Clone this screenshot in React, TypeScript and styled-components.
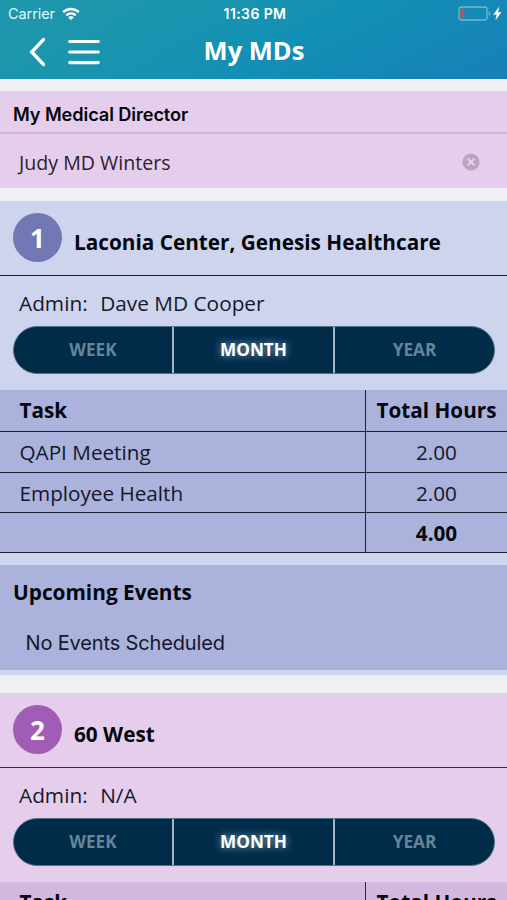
import React from "react";
import styled, { createGlobalStyle } from "styled-components";

type Tone = "blue" | "pink";

const tones = {
  blue: { card: "#ced4ee", panel: "#abb2db", badge: "#7278b4", line: "#1d2230" },
  pink: { card: "#e5ceec", panel: "#d2b8e0", badge: "#a15db6", line: "#382838" },
};

const GlobalStyle = createGlobalStyle`
  * { box-sizing: border-box; }
  html, body, #root { height: 100%; }
  body {
    margin: 0;
    overflow: hidden;
    background: #efeff4;
    color: #05070f;
    font-family: "Open Sans", sans-serif;
    font-size: 20.7px;
  }
`;

const Screen = styled.div`
  display: flex;
  flex-direction: column;
  width: 507px;
  height: 900px;
  overflow: hidden;
`;

const Header = styled.header`
  flex: none;
  height: 79px;
  color: #fff;
  background: linear-gradient(152deg, #1f97ab 0%, #1b95ae 28%, #128fb5 58%, #1780b8 100%);
  box-shadow: 0 1px 0 #dff0f8;
`;

const StatusBar = styled.div`
  display: grid;
  grid-template-columns: 1fr 120px 1fr;
  align-items: center;
  height: 27px;
  padding: 0 5px 0 8px;
  font-family: Inter, sans-serif;
  font-size: 14.5px;
`;

const Carrier = styled.div`
  display: flex;
  align-items: center;
  gap: 7px;
  color: #e0f6fa;
  letter-spacing: -0.08px;
`;

const Clock = styled.div`
  text-align: center;
  font-weight: 600;
  font-size: 14px;
  letter-spacing: 0.4px;
  white-space: nowrap;
`;

const Power = styled.div`
  display: flex;
  justify-content: flex-end;
`;

const NavBar = styled.nav`
  display: grid;
  grid-template-columns: 125px 1fr 125px;
  align-items: center;
  height: 50px;
`;

const NavActions = styled.div`
  display: flex;
  gap: 22px;
  padding-left: 29px;
`;

const Title = styled.h1`
  margin: 0;
  padding: 0 0 4px 1px;
  text-align: center;
  font-size: 25.5px;
  line-height: 46px;
  font-weight: 700;
`;

const Director = styled.section`
  flex: none;
  margin-top: 12.3px;
  height: 97.2px;
  background: ${tones.pink.card};
`;

const DirectorTitle = styled.h2`
  margin: 0;
  height: 43px;
  padding-left: 13px;
  border-bottom: 2px solid #cdb6d4;
  font: 600 18.2px/46px Inter, sans-serif;
  letter-spacing: -0.1px;
`;

const DirectorRow = styled.div`
  display: flex;
  align-items: center;
  justify-content: space-between;
  height: 56px;
  padding: 0 27px 0 19px;
  font-size: 19.6px;
  color: #2b2030;
`;

const Facility = styled.section<{ $tone: Tone; $gap: number }>`
  flex: none;
  margin-top: ${(p) => p.$gap}px;
  height: 474px;
  background: ${(p) => tones[p.$tone].card};
`;

const FacilityHeader = styled.div<{ $tone: Tone }>`
  display: flex;
  align-items: flex-start;
  gap: 12px;
  height: 75px;
  padding: 12px 13px 0;
  border-bottom: 1.4px solid ${(p) => tones[p.$tone].line};
`;

const NumberBadge = styled.span<{ $tone: Tone }>`
  display: grid;
  place-items: center;
  width: 49px;
  height: 49px;
  border-radius: 50%;
  background: ${(p) => tones[p.$tone].badge};
  color: #fff;
  font-size: 26px;
  font-weight: 700;
  line-height: 50px;
`;

const FacilityName = styled.h2`
  margin: 0;
  padding-top: 15px;
  font-size: 20.75px;
  line-height: 28px;
  font-weight: 700;
  white-space: nowrap;
`;

const Admin = styled.div`
  display: flex;
  gap: 12.6px;
  height: 50px;
  padding-left: 19px;
  line-height: 55px;
  font-size: 20.8px;
  color: #15182a;
`;

const Periods = styled.div`
  display: grid;
  grid-template-columns: 158px 161px 161px;
  width: 482px;
  height: 48px;
  margin-left: 13px;
  border: 1px solid #4f7187;
  border-radius: 24px;
  overflow: hidden;
  background: #002b49;
`;

const Period = styled.button<{ $active?: boolean }>`
  padding: 0;
  border: 0;
  background: none;
  font: 700 17.2px/46px "Open Sans", sans-serif;
  color: ${(p) => (p.$active ? "#fff" : "#66859a")};
  text-shadow: ${(p) => (p.$active ? "0 0 8px rgba(190, 225, 245, 0.75)" : "none")};
  & + & { border-left: 2px solid #a4b5c4; }
`;

const Table = styled.div<{ $tone: Tone }>`
  margin-top: 16px;
  background: ${(p) => tones[p.$tone].panel};
`;

const TableRow = styled.div<{ $tone: Tone; $bold?: boolean; $height: number }>`
  display: grid;
  grid-template-columns: 366px 1fr;
  grid-template-rows: 100%;
  height: ${(p) => p.$height}px;
  border-bottom: 1.4px solid ${(p) => tones[p.$tone].line};
  font-weight: ${(p) => (p.$bold ? 700 : 400)};
  line-height: 40px;
  color: ${(p) => (p.$bold ? "#05070f" : "#14182a")};
`;

const TaskCell = styled.div<{ $tone: Tone }>`
  padding-left: 19.5px;
  border-right: 1.4px solid ${(p) => tones[p.$tone].line};
`;

const HoursCell = styled.div`
  text-align: center;
  white-space: nowrap;
`;

const Events = styled.div<{ $tone: Tone }>`
  height: 105px;
  margin-top: 12px;
  padding-left: 13px;
  background: ${(p) => tones[p.$tone].panel};
`;

const EventsTitle = styled.h3`
  margin: 0;
  font-size: 20.8px;
  line-height: 54px;
  font-weight: 700;
`;

const NoEvents = styled.p`
  margin: 0;
  padding-left: 12.5px;
  font: 400 20px/48px Inter, sans-serif;
  letter-spacing: -0.15px;
  color: #14182a;
`;

const WifiIcon = () => (
  <svg width="18" height="14" viewBox="0 0 18 14" fill="none" stroke="#fff" strokeWidth="2.4">
    <path d="M1.2 5.2a11 11 0 0 1 15.6 0" />
    <path d="M4.3 8.3a6.7 6.7 0 0 1 9.4 0" />
    <path d="M6.3 10.4a3.9 3.9 0 0 1 5.4 0L9 13z" fill="#fff" stroke="none" />
  </svg>
);

const BatteryIcon = () => (
  <svg width="44" height="15" viewBox="0 0 44 15">
    <rect x="1" y="1" width="28" height="13" rx="2.5" fill="none" stroke="#71b9d3" strokeWidth="1.3" />
    <rect x="2.6" y="2.8" width="3.6" height="9.4" rx="1" fill="#cf4c4b" />
    <path d="M30.7 5v5q1.6-.7 1.6-2.5T30.7 5z" fill="#71b9d3" />
    <path d="M40.8 1.4 35.6 8.4h3.2l-1 5.2 5.4-7.2h-3.3z" fill="#fff" stroke="#fff" strokeWidth="0.4" />
  </svg>
);

const BackIcon = () => (
  <svg width="17" height="30" viewBox="0 0 17 30" fill="none" stroke="#fff" strokeWidth="3.5">
    <path d="M14.4 2.6 2.8 15l11.6 12.4" strokeLinecap="round" strokeLinejoin="miter" />
  </svg>
);

const MenuIcon = () => (
  <svg width="32" height="30" viewBox="0 0 32 30" stroke="#fff" strokeWidth="3.2" strokeLinecap="round">
    <path d="M1.7 4.5h28.6M1.7 15h28.6M1.7 25.6h28.6" />
  </svg>
);

const ClearIcon = () => (
  <svg width="18" height="18" viewBox="0 0 18 18">
    <circle cx="9" cy="9" r="8.6" fill="#b9a5c0" />
    <path d="m5.8 5.8 6.4 6.4m0-6.4-6.4 6.4" stroke="#e7d3ed" strokeWidth="2" />
  </svg>
);

interface FacilityProps {
  tone: Tone;
  gap: number;
  number: number;
  name: string;
  admin: string;
  tasks: [string, string][];
  total?: string;
}

const FacilityCard = ({ tone, gap, number, name, admin, tasks, total }: FacilityProps) => (
  <Facility $tone={tone} $gap={gap}>
    <FacilityHeader $tone={tone}>
      <NumberBadge $tone={tone}>{number}</NumberBadge>
      <FacilityName>{name}</FacilityName>
    </FacilityHeader>
    <Admin>
      <span>Admin:</span>
      <span>{admin}</span>
    </Admin>
    <Periods>
      <Period>WEEK</Period>
      <Period $active>MONTH</Period>
      <Period>YEAR</Period>
    </Periods>
    <Table $tone={tone}>
      <TableRow $tone={tone} $bold $height={42}>
        <TaskCell $tone={tone}>Task</TaskCell>
        <HoursCell>Total Hours</HoursCell>
      </TableRow>
      {tasks.map(([task, hours]) => (
        <TableRow key={task} $tone={tone} $height={40.7}>
          <TaskCell $tone={tone}>{task}</TaskCell>
          <HoursCell>{hours}</HoursCell>
        </TableRow>
      ))}
      {total && (
        <TableRow $tone={tone} $bold $height={39.4}>
          <TaskCell $tone={tone} />
          <HoursCell>{total}</HoursCell>
        </TableRow>
      )}
    </Table>
    {total && (
      <Events $tone={tone}>
        <EventsTitle>Upcoming Events</EventsTitle>
        <NoEvents>No Events Scheduled</NoEvents>
      </Events>
    )}
  </Facility>
);

export default function App() {
  return (
    <>
      <GlobalStyle />
      <Screen>
        <Header>
          <StatusBar>
            <Carrier>
              Carrier
              <WifiIcon />
            </Carrier>
            <Clock>11:36 PM</Clock>
            <Power>
              <BatteryIcon />
            </Power>
          </StatusBar>
          <NavBar>
            <NavActions>
              <BackIcon />
              <MenuIcon />
            </NavActions>
            <Title>My MDs</Title>
          </NavBar>
        </Header>
        <Director>
          <DirectorTitle>My Medical Director</DirectorTitle>
          <DirectorRow>
            <span>Judy MD Winters</span>
            <ClearIcon />
          </DirectorRow>
        </Director>
        <FacilityCard
          tone="blue"
          gap={12.5}
          number={1}
          name="Laconia Center, Genesis Healthcare"
          admin="Dave MD Cooper"
          tasks={[
            ["QAPI Meeting", "2.00"],
            ["Employee Health", "2.00"],
          ]}
          total="4.00"
        />
        <FacilityCard tone="pink" gap={18} number={2} name="60 West" admin="N/A" tasks={[]} />
      </Screen>
    </>
  );
}
